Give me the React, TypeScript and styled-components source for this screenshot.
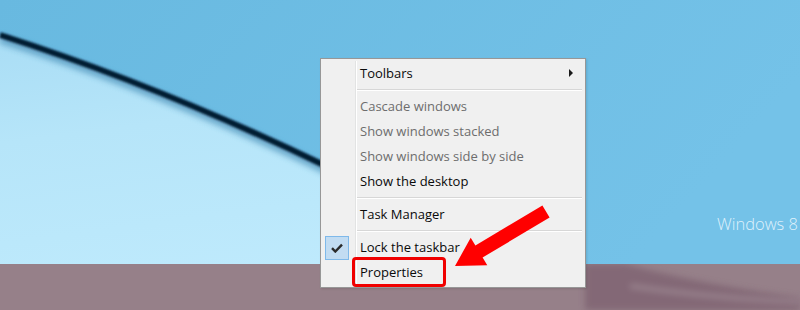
import React from "react";
import styled, { createGlobalStyle } from "styled-components";

const GlobalStyle = createGlobalStyle`
  html, body { margin: 0; padding: 0; }
  body { width: 800px; height: 310px; overflow: hidden; background: #69b9e0; }
  * { box-sizing: border-box; }
`;

const Desktop = styled.div`
  position: relative;
  width: 800px;
  height: 310px;
  overflow: hidden;
  display: flex;
  flex-direction: column;
  font-family: "Open Sans", "Noto Sans", Arial, sans-serif;
`;

const WallpaperArea = styled.div`
  position: relative;
  flex: 0 0 264px;
  display: flex;
  justify-content: flex-end;
  align-items: flex-end;
  padding: 0 2px 29px 0;
`;

const WallpaperArt = styled.svg`
  position: absolute;
  inset: 0;
  width: 800px;
  height: 264px;
`;

const Watermark = styled.span`
  position: relative;
  font-family: "Open Sans", "Noto Sans", sans-serif;
  font-weight: 300;
  font-size: 16.5px;
  line-height: 22px;
  color: rgba(238, 249, 255, 0.88);
`;

const Taskbar = styled.div`
  position: relative;
  flex: 1 1 auto;
  background: #968089;
`;

const TaskbarArt = styled.svg`
  position: absolute;
  inset: 0;
  width: 800px;
  height: 46px;
`;

const Menu = styled.div`
  position: absolute;
  left: 320px;
  top: 58px;
  width: 266px;
  padding: 1px 0 3px 0;
  background: #f0f0f0;
  border: 1px solid #979797;
  box-shadow: 1px 1px 2px rgba(0, 0, 0, 0.12);
  display: flex;
  flex-direction: column;

  &::before {
    content: "";
    position: absolute;
    left: 34px;
    top: 2px;
    bottom: 2px;
    width: 1px;
    background: #e2e3e3;
    box-shadow: 1px 0 0 #ffffff;
  }
`;

const Item = styled.div<{ $disabled?: boolean }>`
  position: relative;
  display: flex;
  align-items: center;
  height: 25px;
  padding-right: 12px;
  font-size: 13px;
  color: ${(p) => (p.$disabled ? "#6d6d6d" : "#0a0a0a")};
`;

const IconCell = styled.div`
  flex: 0 0 34px;
  height: 25px;
  display: flex;
  align-items: center;
  padding-left: 4px;
`;

const CheckBox = styled.div`
  width: 24px;
  height: 24px;
  background: #c2dcf2;
  border: 1px solid #7fb9ea;
  display: flex;
  align-items: center;
  justify-content: center;
  margin-top: 2px;
`;

const Label = styled.span`
  flex: 1 1 auto;
  padding-left: 5px;
  white-space: nowrap;
`;

const SubArrow = styled.span`
  width: 0;
  height: 0;
  border-top: 4px solid transparent;
  border-bottom: 4px solid transparent;
  border-left: 4px solid #1a1a1a;
`;

const Separator = styled.div`
  height: 8px;
  display: flex;
  align-items: center;
  margin: 0 3px 0 35px;

  &::after {
    content: "";
    flex: 1;
    height: 1px;
    background: #d7d7d7;
    box-shadow: 0 1px 0 #ffffff;
  }
`;

const Highlight = styled.div`
  position: absolute;
  left: 352px;
  top: 257px;
  width: 94px;
  height: 30px;
  border: 3px solid #f00000;
  border-radius: 4px;
  pointer-events: none;
`;

const ArrowArt = styled.svg`
  position: absolute;
  left: 0;
  top: 0;
  width: 800px;
  height: 310px;
  pointer-events: none;
`;

type Entry =
  | { kind: "sep" }
  | { kind: "item"; label: string; disabled?: boolean; checked?: boolean; submenu?: boolean };

const entries: Entry[] = [
  { kind: "item", label: "Toolbars", submenu: true },
  { kind: "sep" },
  { kind: "item", label: "Cascade windows", disabled: true },
  { kind: "item", label: "Show windows stacked", disabled: true },
  { kind: "item", label: "Show windows side by side", disabled: true },
  { kind: "item", label: "Show the desktop" },
  { kind: "sep" },
  { kind: "item", label: "Task Manager" },
  { kind: "sep" },
  { kind: "item", label: "Lock the taskbar", checked: true },
  { kind: "item", label: "Properties" },
];

const Check = () => (
  <svg width="12" height="10" viewBox="0 0 12 10">
    <path d="M1 5.2 L4.3 8.5 L11 1.6" fill="none" stroke="#2b2b2b" strokeWidth="2.4" />
  </svg>
);

const LINE = "M0 35 Q160 86 330 168 L640 318";

export default function App() {
  return (
    <>
      <GlobalStyle />
      <Desktop>
        <WallpaperArea>
          <WallpaperArt viewBox="0 0 800 264">
            <defs>
              <linearGradient id="sky" x1="0" y1="0" x2="1" y2="0.3">
                <stop offset="0" stopColor="#68b9e0" />
                <stop offset="1" stopColor="#74c2e8" />
              </linearGradient>
              <linearGradient id="light" x1="0" y1="0" x2="0.3" y2="1">
                <stop offset="0" stopColor="#a9ddf5" />
                <stop offset="0.35" stopColor="#b6e5f9" />
                <stop offset="1" stopColor="#c0ebfd" />
              </linearGradient>
              <filter id="soft" x="-10%" y="-50%" width="120%" height="200%">
                <feGaussianBlur stdDeviation="3" />
              </filter>
              <filter id="soft1" x="-10%" y="-50%" width="120%" height="200%">
                <feGaussianBlur stdDeviation="0.8" />
              </filter>
            </defs>
            <rect width="800" height="264" fill="url(#sky)" />
            <path d={`${LINE} L0 320 Z`} fill="url(#light)" />
            <g transform="translate(0 4)">
              <path
                d={LINE}
                fill="none"
                stroke="#2a78a6"
                strokeWidth="8"
                opacity="0.6"
                filter="url(#soft)"
              />
            </g>
            <path d={LINE} fill="none" stroke="#021a30" strokeWidth="6" filter="url(#soft1)" />
          </WallpaperArt>
          <Watermark>Windows 8</Watermark>
        </WallpaperArea>
        <Taskbar>
          <TaskbarArt viewBox="0 0 800 46">
            <defs>
              <filter id="tb" x="-10%" y="-50%" width="120%" height="200%">
                <feGaussianBlur stdDeviation="3" />
              </filter>
            </defs>
            <path
              d="M585 0 L625 0 Q700 20 800 34 L800 46 L585 46 Z"
              fill="#7d6070"
              opacity="0.75"
              filter="url(#tb)"
            />
            <path
              d="M630 22 Q710 34 800 38"
              fill="none"
              stroke="#a8969f"
              strokeWidth="5"
              opacity="0.55"
              filter="url(#tb)"
            />
          </TaskbarArt>
        </Taskbar>

        <Menu>
          {entries.map((e, i) =>
            e.kind === "sep" ? (
              <Separator key={i} />
            ) : (
              <Item key={i} $disabled={e.disabled}>
                <IconCell>
                  {e.checked && (
                    <CheckBox>
                      <Check />
                    </CheckBox>
                  )}
                </IconCell>
                <Label>{e.label}</Label>
                {e.submenu && <SubArrow />}
              </Item>
            )
          )}
        </Menu>

        <Highlight />
        <ArrowArt viewBox="0 0 800 310">
          <polygon
            points="455,266 470.7,237.8 475.4,245.5 542.4,205.5 549.6,217.5 482.6,257.5 487.3,265.2"
            fill="#ff0000"
          />
        </ArrowArt>
      </Desktop>
    </>
  );
}
